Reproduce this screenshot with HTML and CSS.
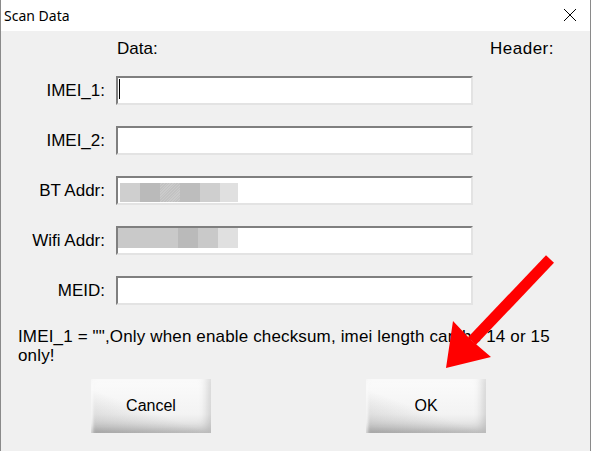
FILE: index.html
```html
<!DOCTYPE html>
<html>
<head>
<meta charset="utf-8">
<link rel="stylesheet" href="styles.css">
</head>
<body>
<div class="dialog">
  <div class="titlebar">
    <span class="title">Scan Data</span>
    <svg class="close" width="14" height="14" viewBox="0 0 14 14"><path d="M1 1 L13 13 M13 1 L1 13" stroke="#000" stroke-width="1" fill="none"/></svg>
  </div>
  <div class="content">
    <div class="heads">
      <span class="head-data">Data:</span>
      <span class="head-header">Header:</span>
    </div>
    <div class="rows">
      <div class="row"><label class="lbl">IMEI_1:</label><div class="field"><span class="caret"></span></div></div>
      <div class="row"><label class="lbl">IMEI_2:</label><div class="field"></div></div>
      <div class="row"><label class="lbl">BT Addr:</label><div class="field"><div class="blur blur-bt"><span class="b w20 c1"></span><span class="b w20 c2"></span><span class="b w20 c3"></span><span class="b w20 c4"></span><span class="b w20 c1"></span><span class="b w18 c5"></span></div></div></div>
      <div class="row"><label class="lbl">Wifi Addr:</label><div class="field"><div class="blur blur-wifi"><span class="b w60 c6"></span><span class="b w20 c2"></span><span class="b w20 c6"></span><span class="b w20 c5"></span></div></div></div>
      <div class="row"><label class="lbl">MEID:</label><div class="field"></div></div>
    </div>
    <p class="msg">IMEI_1 = "",Only when enable checksum, imei length can be 14 or 15 only!</p>
    <div class="buttons">
      <div class="btn">Cancel</div>
      <div class="btn">OK</div>
    </div>
  </div>
  <svg class="arrow" width="592" height="451" viewBox="0 0 592 451">
    <line x1="550" y1="259" x2="472" y2="341" stroke="#ff0000" stroke-width="11"/>
    <polygon points="446,368 453,321 470,339 491,357" fill="#ff0000"/>
  </svg>
</div>
</body>
</html>
```

FILE: styles.css
```css
html, body {
  margin: 0;
  padding: 0;
  background: #ffffff;
}
.dialog {
  position: relative;
  width: 591px;
  height: 451px;
  box-sizing: border-box;
  border-left: 1px solid #8a8a8a;
  border-right: 1px solid #8a8a8a;
  background: #f0f0f0;
  font-family: "Liberation Sans", Arial, sans-serif;
  color: #000;
  overflow: hidden;
}
.titlebar {
  height: 31px;
  background: #ffffff;
  display: flex;
  align-items: center;
  justify-content: space-between;
  padding: 0 13px 0 3px;
}
.title {
  font-family: "Noto Sans", "Open Sans", sans-serif;
  font-size: 14px;
  margin-top: -1px;
}
.close {
  display: block;
  margin-top: -1px;
}
.content {
  padding: 8px 0 0 0;
}
.heads {
  display: flex;
  height: 20px;
  font-size: 17px;
  line-height: 20px;
}
.head-data {
  margin-left: 116px;
}
.head-header {
  margin-left: auto;
  margin-right: 36px;
  letter-spacing: 0.5px;
}
.rows {
  margin-top: 17px;
  display: flex;
  flex-direction: column;
  gap: 21px;
}
.row {
  display: flex;
  align-items: center;
  height: 29px;
}
.lbl {
  width: 104px;
  text-align: right;
  font-size: 17px;
  margin-right: 11px;
}
.field {
  width: 357px;
  height: 29px;
  box-sizing: border-box;
  background: #ffffff;
  border-top: 2px solid #7f7f7f;
  border-left: 2px solid #7f7f7f;
  border-right: 2px solid #e3e3e3;
  border-bottom: 2px solid #e3e3e3;
  position: relative;
}
.caret {
  display: block;
  width: 1px;
  height: 20px;
  background: #000;
  margin: 1px 0 0 1px;
}
.blur {
  display: flex;
  height: 19px;
}
.blur-bt {
  margin: 5px 0 0 2px;
}
.blur-wifi {
  margin: 0;
  height: 20px;
}
.b { display: block; height: 100%; }
.w18 { width: 18px; }
.w20 { width: 20px; }
.w60 { width: 60px; }
.c1 { background: #cfcfcf; }
.c2 { background: #bababa; }
.c3 { background: repeating-linear-gradient(135deg, #c2c2c2 0 1px, #cbcbcb 1px 2px); }
.c4 { background: #bdbdbd; }
.c5 { background: #e0e0e0; }
.c6 { background: #c9c9c9; }
.msg {
  margin: 22px 0 0 0;
  padding: 0 30px 0 17px;
  font-size: 17px;
  line-height: 19px;
  letter-spacing: 0.15px;
}
.buttons {
  display: flex;
  margin-top: 14px;
  padding-left: 90px;
  gap: 155px;
}
.btn {
  width: 120px;
  height: 54px;
  display: flex;
  align-items: center;
  justify-content: center;
  font-size: 16px;
  background:
    linear-gradient(200deg, rgba(255,255,255,0) 55%, rgba(120,120,120,0.3) 100%),
    linear-gradient(to bottom, #fbfbfb 0%, #f3f3f3 65%, #d8d8d8 100%);
  box-shadow: inset -4px -4px 8px rgba(0,0,0,0.15), inset 2px 2px 3px rgba(255,255,255,0.9);
}
.arrow {
  position: absolute;
  left: -1px;
  top: 0;
  pointer-events: none;
}
```
